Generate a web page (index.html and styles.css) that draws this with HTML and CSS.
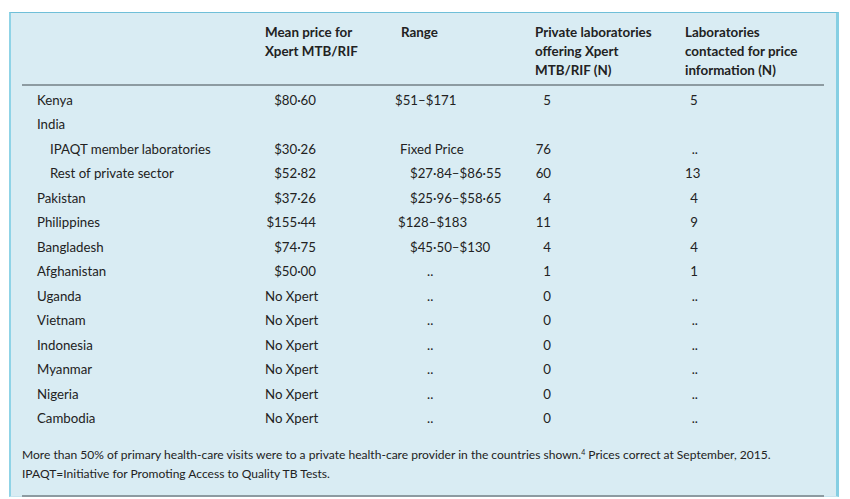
FILE: index.html
```html
<!DOCTYPE html>
<html lang="en">
<head>
<meta charset="utf-8">
<title>Xpert MTB/RIF prices</title>
<link rel="stylesheet" href="styles.css">
</head>
<body>
<div class="panel">
  <table class="data">
    <colgroup>
      <col class="c1"><col class="c2"><col class="c3"><col class="c4"><col class="c5">
    </colgroup>
    <thead>
      <tr>
        <th></th>
        <th>Mean price for<br>Xpert MTB/RIF</th>
        <th class="h-range">Range</th>
        <th>Private laboratories<br>offering Xpert<br>MTB/RIF (N)</th>
        <th>Laboratories<br>contacted for price<br>information (N)</th>
      </tr>
    </thead>
    <tbody>
      <tr><td class="name">Kenya</td><td><span class="price">$80·60</span></td><td><span class="rg o0">$51–$171</span></td><td><span class="n4">5</span></td><td><span class="n5 k">5</span></td></tr>
      <tr><td class="name">India</td><td></td><td></td><td></td><td></td></tr>
      <tr><td class="name sub">IPAQT member laboratories</td><td><span class="price">$30·26</span></td><td><span class="rg o5">Fixed Price</span></td><td><span class="n4">76</span></td><td><span class="n5">..</span></td></tr>
      <tr><td class="name sub">Rest of private sector</td><td><span class="price">$52·82</span></td><td><span class="rg o15">$27·84–$86·55</span></td><td><span class="n4">60</span></td><td><span class="n5">13</span></td></tr>
      <tr><td class="name">Pakistan</td><td><span class="price">$37·26</span></td><td><span class="rg o15">$25·96–$58·65</span></td><td><span class="n4">4</span></td><td><span class="n5">4</span></td></tr>
      <tr><td class="name">Philippines</td><td><span class="price">$155·44</span></td><td><span class="rg o3">$128–$183</span></td><td><span class="n4">11</span></td><td><span class="n5">9</span></td></tr>
      <tr><td class="name">Bangladesh</td><td><span class="price">$74·75</span></td><td><span class="rg o15">$45·50–$130</span></td><td><span class="n4">4</span></td><td><span class="n5">4</span></td></tr>
      <tr><td class="name">Afghanistan</td><td><span class="price">$50·00</span></td><td><span class="rg o32">..</span></td><td><span class="n4">1</span></td><td><span class="n5">1</span></td></tr>
      <tr><td class="name">Uganda</td><td><span class="price">No Xpert</span></td><td><span class="rg o32">..</span></td><td><span class="n4">0</span></td><td><span class="n5">..</span></td></tr>
      <tr><td class="name">Vietnam</td><td><span class="price">No Xpert</span></td><td><span class="rg o32">..</span></td><td><span class="n4">0</span></td><td><span class="n5">..</span></td></tr>
      <tr><td class="name">Indonesia</td><td><span class="price">No Xpert</span></td><td><span class="rg o32">..</span></td><td><span class="n4">0</span></td><td><span class="n5">..</span></td></tr>
      <tr><td class="name">Myanmar</td><td><span class="price">No Xpert</span></td><td><span class="rg o32">..</span></td><td><span class="n4">0</span></td><td><span class="n5">..</span></td></tr>
      <tr><td class="name">Nigeria</td><td><span class="price">No Xpert</span></td><td><span class="rg o32">..</span></td><td><span class="n4">0</span></td><td><span class="n5">..</span></td></tr>
      <tr><td class="name">Cambodia</td><td><span class="price">No Xpert</span></td><td><span class="rg o32">..</span></td><td><span class="n4">0</span></td><td><span class="n5">..</span></td></tr>
    </tbody>
  </table>
  <p class="note">More than 50% of primary health-care visits were to a private health-care provider in the countries shown.<sup>4</sup> Prices correct at September, 2015.<br>IPAQT=Initiative for Promoting Access to Quality TB Tests.</p>
</div>
</body>
</html>
```
FILE: styles.css
```css
html, body {
  margin: 0;
  padding: 0;
  background: #ffffff;
}

body {
  font-family: "Lato", "Liberation Sans", sans-serif;
  color: #222222;
}

.panel {
  box-sizing: border-box;
  width: 830px;
  height: 485px;
  margin: 12px 0 0 9px;
  padding: 0 12px 1px 11px;
  background: #d9ecf3;
  border-left: 2px solid #8fd3e6;
  border-right: 3px solid #86cfe3;
  border-top: 1px solid #6fbfd8;
  border-bottom: 1px solid #c6e4ee;
}

.data {
  width: 802px;
  border-collapse: collapse;
  table-layout: fixed;
  font-size: 13.25px;
}

.c1 { width: 243px; }
.c2 { width: 130px; }
.c3 { width: 140px; }
.c4 { width: 150px; }
.c5 { width: 139px; }

.data th {
  text-align: left;
  vertical-align: top;
  font-size: 13.4px;
  font-weight: 700;
  line-height: 19px;
  padding: 10px 0 4px 0;
  border-bottom: 2px solid #8d9ba1;
}

.data th.h-range { padding-left: 6px; }

.data td {
  height: 24.5px;
  padding: 0;
  line-height: 19px;
  vertical-align: middle;
  white-space: nowrap;
}

.data tbody tr:first-child td {
  padding-top: 2px;
}

.name { padding-left: 15px !important; }
.name.sub { padding-left: 28px !important; }

.price {
  display: inline-block;
  width: 51px;
  text-align: right;
}

.rg { display: inline-block; }
.o0 { padding-left: 0; }
.o3 { padding-left: 3px; }
.o5 { padding-left: 5px; }
.o15 { padding-left: 15px; }
.o32 { padding-left: 32px; }

.n4 {
  display: inline-block;
  width: 16px;
  text-align: right;
}

.n5 {
  display: inline-block;
  width: 13px;
  text-align: right;
}

.n5.k { text-align: left; padding-left: 5px; box-sizing: border-box; }

.note {
  margin: 14px 0 0 0;
  padding: 0 0 12px 0;
  font-size: 12.05px;
  line-height: 19px;
  border-bottom: 2px solid #8d9ba1;
}

.note sup {
  font-size: 7px;
  line-height: 0;
  vertical-align: 4px;
}
```
